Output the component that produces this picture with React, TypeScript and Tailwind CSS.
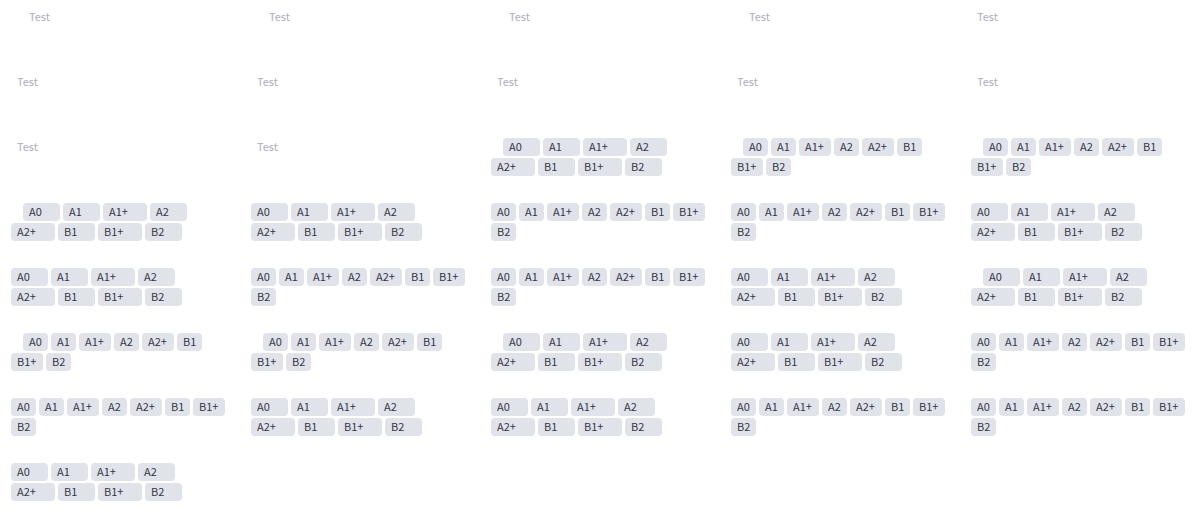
import clsx from "clsx";

type Variant = "empty" | "compact" | "wide";

interface Cell {
  variant: Variant;
  indented: boolean;
}

const cell = (variant: Variant, indented = false): Cell => ({ variant, indented });

const cells: Cell[] = [
  cell("empty", true), cell("empty", true), cell("empty", true), cell("empty", true), cell("empty"),
  cell("empty"), cell("empty"), cell("empty"), cell("empty"), cell("empty"),
  cell("empty"), cell("empty"), cell("wide", true), cell("compact", true), cell("compact", true),
  cell("wide", true), cell("wide"), cell("compact"), cell("compact"), cell("wide"),
  cell("wide"), cell("compact"), cell("compact"), cell("wide"), cell("wide", true),
  cell("compact", true), cell("compact", true), cell("wide", true), cell("wide"), cell("compact"),
  cell("compact"), cell("wide"), cell("wide"), cell("compact"), cell("compact"),
  cell("wide"),
];

const levels = ["A0", "A1", "A1+", "A2", "A2+", "B1", "B1+", "B2"];

function firstLineCount({ variant, indented }: Cell) {
  if (variant === "wide") return 4;
  return indented ? 6 : 7;
}

function Tag({ label, wide }: { label: string; wide: boolean }) {
  const long = label.length > 2;
  return (
    <li
      className={clsx(
        "h-[18px] shrink-0 rounded bg-[#e0e3ea] pl-1.5 leading-4 whitespace-nowrap text-[#343645]",
        wide ? (long ? "w-11" : "w-[37px]") : long ? "w-8" : "w-[25px]",
      )}
    >
      {label}
    </li>
  );
}

function TagField({ item }: { item: Cell }) {
  if (item.variant === "empty") {
    return (
      <p className={clsx("leading-4 text-[#aeadbf]", item.indented ? "pl-[18px]" : "pl-1.5")}>
        Test
      </p>
    );
  }
  const count = firstLineCount(item);
  const wide = item.variant === "wide";
  return (
    <div className="flex flex-col gap-0.5">
      <ul className={clsx("flex gap-[3px]", item.indented && "pl-3")}>
        {levels.slice(0, count).map((label) => (
          <Tag key={label} label={label} wide={wide} />
        ))}
      </ul>
      <ul className="flex gap-[3px]">
        {levels.slice(count).map((label) => (
          <Tag key={label} label={label} wide={wide} />
        ))}
      </ul>
    </div>
  );
}

export default function App() {
  return (
    <main className="grid auto-rows-[65px] grid-cols-5 bg-white pt-2 font-[family-name:'Noto_Sans_CJK_SC',sans-serif] text-[11px]">
      {cells.map((item, index) => (
        <section key={index} className="pl-[11px]">
          <TagField item={item} />
        </section>
      ))}
    </main>
  );
}
